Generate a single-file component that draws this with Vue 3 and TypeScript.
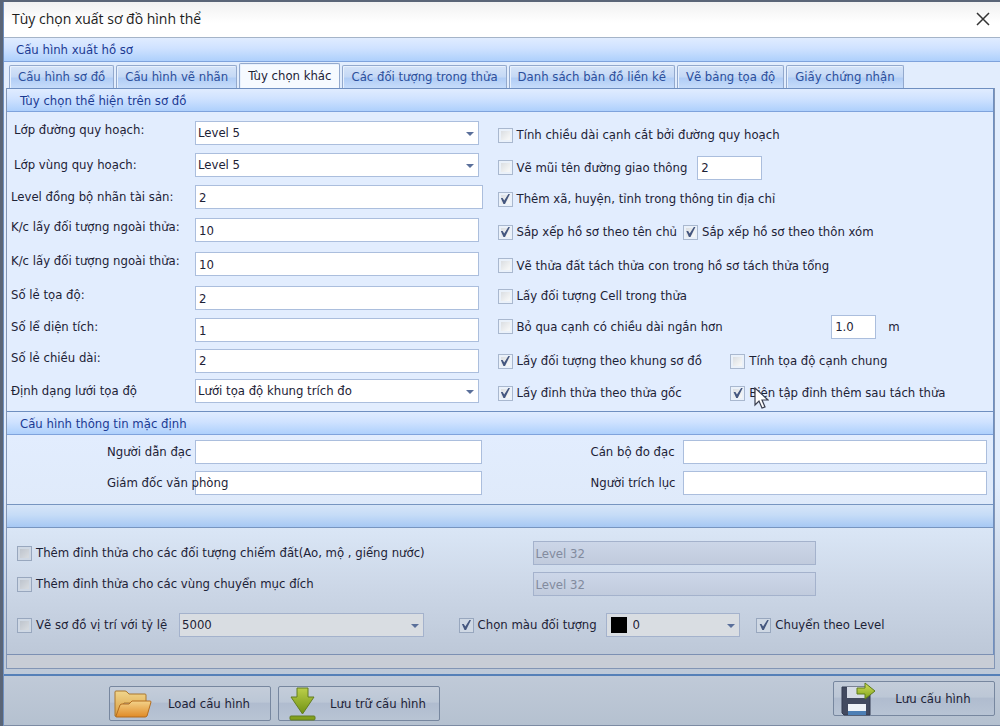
<script setup lang="ts">
import { ref } from 'vue'

interface Field {
  id: string
  label: string
  value: string
  kind: 'select' | 'text'
  raised?: boolean
  wide?: boolean
}

const tabs = [
  'Cấu hình sơ đồ',
  'Cấu hình vẽ nhãn',
  'Tùy chọn khác',
  'Các đối tượng trong thửa',
  'Danh sách bản đồ liền kề',
  'Vẽ bảng tọa độ',
  'Giấy chứng nhận',
]
const activeTab = ref(2)

const fields = ref<Field[]>([
  { id: 'road', label: 'Lớp đường quy hoạch:', value: 'Level 5', kind: 'select', raised: true },
  { id: 'zone', label: 'Lớp vùng quy hoạch:', value: 'Level 5', kind: 'select' },
  { id: 'sync', label: 'Level đồng bộ nhãn tài sản:', value: '2', kind: 'text', wide: true },
  { id: 'dist1', label: 'K/c lấy đối tượng ngoài thửa:', value: '10', kind: 'text', raised: true },
  { id: 'dist2', label: 'K/c lấy đối tượng ngoài thửa:', value: '10', kind: 'text', raised: true },
  { id: 'coord', label: 'Số lẻ tọa độ:', value: '2', kind: 'text', raised: true },
  { id: 'area', label: 'Số lể diện tích:', value: '1', kind: 'text', raised: true },
  { id: 'length', label: 'Số lẻ chiều dài:', value: '2', kind: 'text', raised: true },
  { id: 'grid', label: 'Định dạng lưới tọa độ', value: 'Lưới tọa độ khung trích đo', kind: 'select' },
])

const opts = ref({
  cut: false,
  arrow: false,
  address: true,
  byOwner: true,
  byVillage: true,
  split: false,
  cell: false,
  skipShort: false,
  frame: true,
  shared: false,
  root: true,
  edit: true,
  occupy: false,
  convert: false,
  locate: false,
  colour: true,
  byLevel: true,
})
const arrowSize = ref('2')
const minLength = ref('1.0')
const people = ref({ guide: '', officer: '', director: '', extractor: '' })
</script>

<template>
  <main class="window">
    <header class="titlebar">
      <h1>Tùy chọn xuất sơ đồ hình thể</h1>
      <button class="close" type="button" aria-label="Đóng">
        <svg width="14" height="14" viewBox="0 0 14 14"><path d="M1 1L13 13M13 1L1 13" fill="none" stroke="#333" stroke-width="1.5" /></svg>
      </button>
    </header>
    <h2 class="band band-main">Cấu hình xuất hồ sơ</h2>

    <nav class="tabs" role="tablist">
      <button
        v-for="(tab, i) in tabs"
        :key="tab"
        type="button"
        role="tab"
        class="tab"
        :class="{ active: i === activeTab }"
        :aria-selected="i === activeTab"
        @click="activeTab = i"
      >{{ tab }}</button>
    </nav>

    <div class="page">
      <section class="group">
        <h3 class="band">Tùy chọn thể hiện trên sơ đồ</h3>
        <div class="options">
          <div class="left">
            <div v-for="f in fields" :key="f.id" class="row">
              <label :for="f.id" :class="{ raised: f.raised, inset: f.id === 'road' || f.id === 'zone' }">{{ f.label }}</label>
              <span v-if="f.kind === 'select'" class="combo">
                <select :id="f.id" v-model="f.value"><option>{{ f.value }}</option></select>
              </span>
              <input v-else :id="f.id" v-model="f.value" type="text" :class="{ wide: f.wide }" />
            </div>
          </div>
          <div class="right">
            <div><label class="check"><input v-model="opts.cut" type="checkbox" />Tính chiều dài cạnh cắt bởi đường quy hoạch</label></div>
            <div>
              <label class="check"><input v-model="opts.arrow" type="checkbox" />Vẽ mũi tên đường giao thông</label>
              <input v-model="arrowSize" class="arrow-size" type="text" aria-label="Cỡ mũi tên" />
            </div>
            <div><label class="check"><input v-model="opts.address" type="checkbox" />Thêm xã, huyện, tỉnh trong thông tin địa chỉ</label></div>
            <div class="pair">
              <label class="check"><input v-model="opts.byOwner" type="checkbox" />Sắp xếp hồ sơ theo tên chủ</label>
              <label class="check"><input v-model="opts.byVillage" type="checkbox" />Sắp xếp hồ sơ theo thôn xóm</label>
            </div>
            <div><label class="check"><input v-model="opts.split" type="checkbox" />Vẽ thửa đất tách thửa con trong hồ sơ tách thửa tổng</label></div>
            <div><label class="check"><input v-model="opts.cell" type="checkbox" />Lấy đối tượng Cell trong thửa</label></div>
            <div class="short">
              <label class="check"><input v-model="opts.skipShort" type="checkbox" />Bỏ qua cạnh có chiều dài ngắn hơn</label>
              <input v-model="minLength" type="text" aria-label="Chiều dài tối thiểu" />
              <span>m</span>
            </div>
            <div class="halves">
              <label class="check"><input v-model="opts.frame" type="checkbox" />Lấy đối tượng theo khung sơ đồ</label>
              <label class="check"><input v-model="opts.shared" type="checkbox" />Tính tọa độ cạnh chung</label>
            </div>
            <div class="halves">
              <label class="check"><input v-model="opts.root" type="checkbox" />Lấy đỉnh thửa theo thửa gốc</label>
              <label class="check edit">
                <input v-model="opts.edit" type="checkbox" />Biên tập đỉnh thêm sau tách thửa
                <svg class="pointer" width="15" height="23" viewBox="0 0 15 23" aria-hidden="true">
                  <path d="M1 1V18L5 14L8 21L11 20L8 13H14Z" fill="#fff" stroke="#3a3f50" stroke-width="1.2" />
                </svg>
              </label>
            </div>
          </div>
        </div>
      </section>

      <section class="group">
        <h3 class="band">Cấu hình thông tin mặc định</h3>
        <div class="defaults">
          <label for="guide">Người dẫn đạc</label>
          <input id="guide" v-model="people.guide" type="text" />
          <label for="officer" class="second">Cán bộ đo đạc</label>
          <input id="officer" v-model="people.officer" type="text" />
          <label for="director">Giám đốc văn phòng</label>
          <input id="director" v-model="people.director" type="text" />
          <label for="extractor" class="second">Người trích lục</label>
          <input id="extractor" v-model="people.extractor" type="text" />
        </div>
      </section>

      <section class="group lower">
        <div class="band"></div>
        <div class="extras">
          <div class="extra">
            <label class="check"><input v-model="opts.occupy" type="checkbox" />Thêm đỉnh thửa cho các đối tượng chiếm đất(Ao, mộ , giếng nước)</label>
            <input type="text" value="Level 32" disabled aria-label="Level chiếm đất" />
          </div>
          <div class="extra">
            <label class="check"><input v-model="opts.convert" type="checkbox" />Thêm đỉnh thửa cho các vùng chuyển mục đích</label>
            <input type="text" value="Level 32" disabled aria-label="Level chuyển mục đích" />
          </div>
          <div class="scale">
            <label class="check"><input v-model="opts.locate" type="checkbox" />Vẽ sơ đồ vị trí với tỷ lệ</label>
            <span class="combo"><select aria-label="Tỷ lệ"><option>5000</option></select></span>
            <label class="check colour-check"><input v-model="opts.colour" type="checkbox" />Chọn màu đối tượng</label>
            <span class="combo colour"><i class="swatch"></i><select aria-label="Màu đối tượng"><option>0</option></select></span>
            <label class="check by-level"><input v-model="opts.byLevel" type="checkbox" />Chuyển theo Level</label>
          </div>
        </div>
      </section>
      <div class="spare"></div>
    </div>

    <footer class="actions">
      <button type="button">
        <svg width="38" height="30" viewBox="0 0 38 30" aria-hidden="true">
          <defs>
            <linearGradient id="fb" x2="0" y2="1"><stop stop-color="#f0d58c" /><stop offset="1" stop-color="#d99a3c" /></linearGradient>
            <linearGradient id="ff" x2="0" y2="1"><stop stop-color="#f3d28a" /><stop offset="1" stop-color="#e08a26" /></linearGradient>
          </defs>
          <path d="M1 27V3Q1 2 2 2H11Q12 2 13 3L15 5H31Q32 5 32 6V14H10L3 28Z" fill="url(#fb)" stroke="#a9772f" />
          <path d="M8 15H15L18 12H36Q37 12 37 13L33 27Q32 28 31 28H3Q2 28 2 27L6 16Q7 15 8 15Z" fill="url(#ff)" stroke="#b36d20" />
        </svg>
        <span>Load cấu hình</span>
      </button>
      <button type="button">
        <svg width="38" height="34" viewBox="0 0 38 34" aria-hidden="true">
          <defs><linearGradient id="dn" x2="0" y2="1"><stop stop-color="#bccf4a" /><stop offset="1" stop-color="#709213" /></linearGradient></defs>
          <path d="M14 1H25V10H31L19.500 27L8 10H14Z" fill="url(#dn)" stroke="#637d22" />
          <rect x="7" y="29" width="25" height="4" rx="1" fill="#83a01c" stroke="#637d22" />
        </svg>
        <span>Lưu trữ cấu hình</span>
      </button>
      <button type="button" class="save">
        <svg width="38" height="34" viewBox="0 0 38 34" aria-hidden="true">
          <defs><linearGradient id="sv" x2="0" y2="1"><stop stop-color="#d5df5c" /><stop offset="1" stop-color="#7da21b" /></linearGradient></defs>
          <path d="M4 5H32V33H6L4 31Z" fill="#424a60" stroke="#333b50" />
          <rect x="9" y="5" width="18" height="11" fill="#d6dce6" />
          <rect x="10" y="22" width="18" height="11" fill="#eef2f7" />
          <rect x="10" y="29" width="18" height="4" fill="#4d7fb5" />
          <path d="M19 6H27V1L37 9L27 17V12H19Z" fill="url(#sv)" stroke="#5f7c1c" />
        </svg>
        <span>Lưu cấu hình</span>
      </button>
    </footer>
  </main>
</template>

<style>
body {
  margin: 0;
  background: #5a6577;
}
</style>

<style scoped>
* {
  box-sizing: border-box;
}
.window {
  margin: 2px 0 0 3px;
  border-left: 1px solid #6e8fc0;
  min-height: calc(100vh - 2px);
  display: flex;
  flex-direction: column;
  background: linear-gradient(#e2edfd 0 480px, #c3cedd 620px, #b8c4d3);
  font: 13px/16px "DejaVu Sans Condensed", "DejaVu Sans", sans-serif;
  color: #1d2236;
}
.titlebar {
  height: 35px;
  display: flex;
  align-items: center;
  justify-content: space-between;
  padding: 0 10px 2px 8px;
  background: linear-gradient(#f1f1f1, #ffffff 60%);
}
h1 {
  margin: 0;
  font: 14px/20px "Open Sans", "Noto Sans", sans-serif;
  color: #1c1c1c;
}
.close {
  display: flex;
  padding: 0;
  border: 0;
  background: none;
}
.band {
  height: 24px;
  margin: 0;
  padding: 0 13px;
  border-top: 1px solid #6f8fc0;
  border-bottom: 1px solid #7fa3dc;
  background: linear-gradient(#e0ecff, #cfe2ff 45%, #aed0fc);
  font: inherit;
  line-height: 24px;
  color: #1b3a93;
}
.band-main {
  height: 25px;
  padding-left: 12px;
  border-top-color: #a5b4c8;
}
.tabs {
  display: flex;
  align-items: flex-end;
  gap: 2px;
  height: 26px;
  padding-left: 5px;
}
.tab {
  height: 23px;
  padding: 0 8px;
  border: 1px solid #93a9cd;
  border-bottom: 0;
  border-radius: 2px 2px 0 0;
  background: linear-gradient(#d6e4f8, #c4d8f5 50%, #b1cdf5 55%, #c6dcfa);
  box-shadow: inset 1px 1px #e8f1fd;
  font: inherit;
  color: #2c4f9c;
  white-space: nowrap;
}
.tab.active {
  height: 25px;
  background: #f6faff;
  color: #1d2236;
}
.page {
  margin: 0 5px 0 2px;
  border: 1px solid #8295b5;
  border-top: 0;
}
.group {
  border-right: 1px solid #6f8fc0;
}
.options {
  display: grid;
  grid-template-columns: 491fr 496fr;
  padding-bottom: 5px;
  background: #e2edfe;
}
.left {
  display: grid;
  grid-template-rows: 37px 32px 32px 34px 34px 34px 30px 31px 30px;
}
.left .row:first-child {
  padding-top: 5px;
}
.row {
  display: grid;
  grid-template-columns: 188px minmax(0, 1fr);
  align-items: center;
  padding-right: 19px;
}
.row label {
  padding-left: 4px;
  white-space: nowrap;
}
.row .raised {
  padding-bottom: 6px;
}
.row .inset {
  padding-left: 7px;
}
input[type='text'],
select {
  width: 100%;
  height: 24px;
  margin: 0;
  padding: 0 3px;
  border: 1px solid #abbedd;
  border-radius: 0;
  background: #fff;
  font: inherit;
  color: #1d2236;
}
select {
  appearance: none;
  padding: 0 20px 0 2px;
}
.row .wide {
  width: calc(100% + 4px);
}
.combo {
  position: relative;
  display: block;
}
.combo::after {
  content: '';
  position: absolute;
  right: 5px;
  top: 11px;
  border: 4px solid transparent;
  border-top-color: #5a6f9a;
  border-bottom: 0;
  pointer-events: none;
}
.right {
  display: grid;
  grid-template-rows: 39px 33px 30px 36px 31px 30px 31px 38px 26px;
}
.right > div {
  display: flex;
  align-items: center;
}
.right > div:first-child {
  padding-top: 7px;
}
.check {
  display: flex;
  align-items: center;
  gap: 4px;
  white-space: nowrap;
}
.check input {
  flex: none;
  appearance: none;
  width: 15px;
  height: 15px;
  margin: 0;
  border: 1px solid #a9b8cf;
  background: linear-gradient(135deg, #d4d8dd, #f5f6f6 75%);
  box-shadow: inset 0 0 0 2px #eaf1fa;
}
.check input:checked::before {
  content: '';
  display: block;
  width: 13px;
  height: 13px;
  background: #45577f;
  clip-path: polygon(18% 42%, 32% 42%, 44% 62%, 76% 12%, 88% 12%, 50% 88%, 38% 88%);
}
.right .arrow-size {
  width: 65px;
  margin-left: 10px;
}
.pair {
  gap: 6px;
}
.right > .short,
.right > .halves {
  display: grid;
}
.right > .short {
  grid-template-columns: 334fr 45px 117fr;
}
.short span {
  padding-left: 12px;
}
.right > .halves {
  grid-template-columns: 233fr 263fr;
}
.edit {
  position: relative;
}
.pointer {
  position: absolute;
  left: 24px;
  top: 2px;
}
.defaults {
  display: grid;
  grid-template-columns: 88px minmax(0, 287fr) 201px minmax(0, 305fr);
  row-gap: 7px;
  align-items: center;
  padding: 5px 6px 9px 100px;
  background: linear-gradient(#e2edfe, #dfeafa);
}
.defaults label {
  position: relative;
  white-space: nowrap;
}
.defaults .second {
  padding-left: 109px;
}
.lower .band {
  background: linear-gradient(#d6e5f8, #c6dcf7 45%, #a6c8f4);
  border-color: #7795c0;
}
.extras {
  padding: 13px 0 17px;
  background: linear-gradient(#dae6f6, #cbd6e6 50%, #bdc8d8);
  border-bottom: 1px solid #7c90b3;
}
.extra {
  display: grid;
  grid-template-columns: 527fr 283fr 177fr;
  align-items: center;
  height: 31px;
  padding-bottom: 7px;
}
.extra .check,
.scale > .check:first-child {
  padding-left: 10px;
}
.lower input[disabled] {
  padding-left: 1px;
  border-color: #a4b2cc;
  background: linear-gradient(#ccd6e8, #c1cbdd);
  color: #828b9e;
}
.scale {
  display: grid;
  grid-template-columns: 172px 245fr 35fr 147px 135fr 16fr 237fr;
  align-items: center;
  margin-top: 10px;
}
.scale .colour-check {
  grid-column: 4;
}
.scale .by-level {
  grid-column: 7;
}
.lower select {
  background: #d9dde2;
  border-color: #a4b2cc;
}
.lower .check input {
  border-color: #98a7be;
  background: linear-gradient(135deg, #b8bfc9, #d5d9de 75%);
  box-shadow: inset 0 0 0 2px #cfd8e4;
}
.lower .check input:checked {
  background: #cfd8e4;
}
.swatch {
  position: absolute;
  left: 5px;
  top: 4px;
  width: 16px;
  height: 16px;
  background: #000;
}
.colour select {
  padding-left: 26px;
}
.spare {
  height: 13px;
  background: #c8cdd6;
}
.actions {
  flex: 1;
  display: flex;
  align-items: flex-start;
  gap: 7px;
  margin-top: 5px;
  padding: 10px 5px 4px 105px;
  border-top: 2px solid #5580b8;
  border-bottom: 1px solid #7c8ba3;
  background: linear-gradient(#c0cad8, #b5c1d0);
}
.actions button {
  display: flex;
  align-items: center;
  width: 162px;
  height: 35px;
  padding: 0 4px;
  border: 1px solid #77879f;
  border-radius: 2px;
  background: linear-gradient(#c4cdda, #bcc7d6 45%, #b0bccf 50%, #b8c4d4);
  font: inherit;
  color: #1d2236;
  white-space: nowrap;
}
.actions span {
  flex: 1;
  text-align: center;
}
.actions .save {
  margin: -5px 0 0 auto;
}
</style>
